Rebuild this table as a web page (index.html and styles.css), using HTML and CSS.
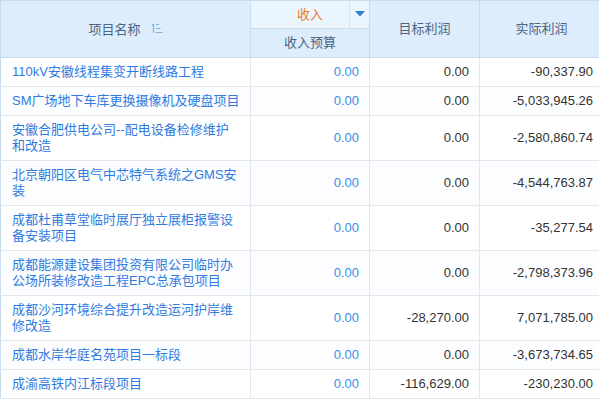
FILE: index.html
```html
<!DOCTYPE html>
<html lang="zh">
<head>
<meta charset="utf-8">
<link rel="stylesheet" href="styles.css">
</head>
<body>
<div class="wrap">
<table class="grid">
  <colgroup>
    <col class="c1"><col class="c2"><col class="c3"><col class="c4">
  </colgroup>
  <thead>
    <tr class="h1">
      <th rowspan="2" class="hname"><span class="hlabel">项目名称</span><svg class="sort" width="12" height="11" viewBox="0 0 12 11"><path d="M2.5 1v9M1 2.5L2.5 1M5 1.5h3M5 5.5h4.5M5 9.5h6.5" stroke="#7fb2e3" stroke-width="1.2" fill="none"/></svg></th>
      <th class="hincome"><span class="orange">收入</span><span class="dd"><svg width="10" height="6" viewBox="0 0 10 6"><path d="M0 0h10L5 5.5z" fill="#2f7fd0"/></svg></span></th>
      <th rowspan="2">目标利润</th>
      <th rowspan="2">实际利润</th>
    </tr>
    <tr class="h2">
      <th>收入预算</th>
    </tr>
  </thead>
  <tbody>
    <tr><td class="name">110kV安徽线程集变开断线路工程</td><td class="blue">0.00</td><td>0.00</td><td>-90,337.90</td></tr>
    <tr><td class="name">SM广场地下车库更换摄像机及硬盘项目</td><td class="blue">0.00</td><td>0.00</td><td>-5,033,945.26</td></tr>
    <tr><td class="name">安徽合肥供电公司--配电设备检修维护和改造</td><td class="blue">0.00</td><td>0.00</td><td>-2,580,860.74</td></tr>
    <tr><td class="name">北京朝阳区电气中芯特气系统之GMS安装</td><td class="blue">0.00</td><td>0.00</td><td>-4,544,763.87</td></tr>
    <tr><td class="name">成都杜甫草堂临时展厅独立展柜报警设备安装项目</td><td class="blue">0.00</td><td>0.00</td><td>-35,277.54</td></tr>
    <tr><td class="name">成都能源建设集团投资有限公司临时办公场所装修改造工程EPC总承包项目</td><td class="blue">0.00</td><td>0.00</td><td>-2,798,373.96</td></tr>
    <tr><td class="name">成都沙河环境综合提升改造运河护岸维修改造</td><td class="blue">0.00</td><td>-28,270.00</td><td>7,071,785.00</td></tr>
    <tr><td class="name">成都水岸华庭名苑项目一标段</td><td class="blue">0.00</td><td>0.00</td><td>-3,673,734.65</td></tr>
    <tr><td class="name">成渝高铁内江标段项目</td><td class="blue">0.00</td><td>-116,629.00</td><td>-230,230.00</td></tr>
  </tbody>
</table>
</div>
</body>
</html>
```
FILE: styles.css
```css
html, body {
  margin: 0;
  padding: 0;
  background: #ffffff;
  overflow: hidden;
}
.wrap {
  width: 599px;
  height: 400px;
  overflow: hidden;
}
.grid {
  border-collapse: collapse;
  table-layout: fixed;
  width: 603px;
  font-family: "Liberation Sans", "Noto Sans CJK SC", sans-serif;
  font-size: 13px;
  color: #333333;
}
.c1 { width: 250px; }
.c2 { width: 119px; }
.c3 { width: 110px; }
.c4 { width: 124px; }
th {
  background: #deedfb;
  color: #4b6584;
  font-weight: normal;
  border: 1px solid #c9dcee;
  text-align: center;
  padding: 0;
  line-height: 16px;
}
.h1 th { height: 27px; }
.h2 th { height: 28px; }
.hname .hlabel { vertical-align: middle; }
.sort { vertical-align: middle; margin-left: 10px; position: relative; top: -1px; }
.hincome {
  position: relative;
  background: #eaf5fe;
}
.orange { color: #f07a2a; }
.dd {
  position: absolute;
  right: 0;
  top: 0;
  bottom: 0;
  width: 19px;
  border-left: 1px solid #d3e4f3;
  display: flex;
  align-items: center;
  justify-content: center;
}
.dd svg { margin-top: -2px; }
.h2 th { background: #deedfb; }
td {
  border: 1px solid #e3e6ea;
  padding: 6px 10px 6px 10px;
  line-height: 16px;
  text-align: right;
  vertical-align: middle;
  background: #ffffff;
}
tbody tr:nth-child(even) td { background: #fcfdff; }
td.name {
  text-align: left;
  padding-left: 11px;
  padding-right: 10px;
  color: #2f7be0;
}
td.blue { color: #3a8ee8; }
.grid tr > :first-child { border-left-color: #c9dcee; }
```
